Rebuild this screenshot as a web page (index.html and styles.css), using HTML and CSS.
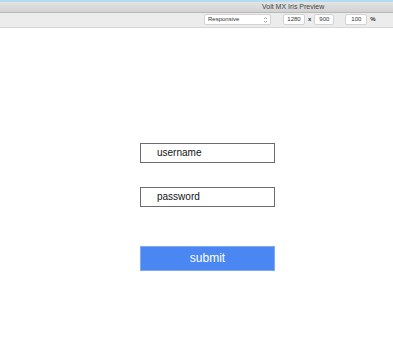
FILE: index.html
```html
<!DOCTYPE html>
<html>
<head>
<meta charset="utf-8">
<link rel="stylesheet" href="styles.css">
</head>
<body>
<div class="window">
  <div class="topstrip"></div>
  <div class="titlebar"><span class="title">Volt MX Iris Preview</span></div>
  <div class="toolbar">
    <div class="select"><span>Responsive</span>
      <svg class="arrows" width="5" height="8" viewBox="0 0 5 8"><path d="M1 3 L2.5 1.5 L4 3 M1 5 L2.5 6.5 L4 5" fill="none" stroke="#888" stroke-width="0.8"/></svg>
    </div>
    <div class="num w1">1280</div>
    <span class="sep">x</span>
    <div class="num w2">900</div>
    <div class="num w3">100</div>
    <span class="pct">%</span>
  </div>
  <div class="content">
    <div class="form">
      <div class="field">username</div>
      <div class="field">password</div>
      <div class="button">submit</div>
    </div>
  </div>
</div>
</body>
</html>
```
FILE: styles.css
```css
html, body { margin: 0; padding: 0; background: #fff; }
body { font-family: "Liberation Sans", Arial, sans-serif; width: 393px; height: 344px; overflow: hidden; }
.topstrip { height: 2px; background: #b3def1; }
.titlebar {
  height: 10px;
  background: linear-gradient(#e4e4e4, #d2d2d2);
  border-bottom: 1px solid #b8b8b8;
  position: relative;
}
.title {
  position: absolute; left: 262px; top: 1px;
  font-size: 7px; color: #444; line-height: 8px; white-space: nowrap;
}
.toolbar {
  height: 15px;
  background: #ececec;
  border-bottom: 1px solid #d6d6d6;
  display: flex; align-items: flex-start;
  padding-top: 1px; box-sizing: border-box;
  font-size: 6px; color: #333;
}
.select {
  margin-left: 204px; width: 67px; height: 11px; box-sizing: border-box;
  background: #fff; border: 1px solid #d3d3d3; border-radius: 2px;
  display: flex; justify-content: space-between; align-items: center;
  padding: 0 2px 0 3px; line-height: 9px;
}
.arrows { display: block; }
.num {
  height: 11px; box-sizing: border-box; background: #fff; border: 1px solid #d3d3d3;
  border-radius: 2px; line-height: 9px; text-align: center;
}
.w1 { margin-left: 12px; width: 22px; }
.sep { margin-left: 3px; margin-right: 3px; line-height: 11px; font-weight: bold; }
.w2 { width: 20px; }
.w3 { margin-left: 11px; width: 22px; }
.pct { margin-left: 3px; line-height: 11px; font-weight: bold; }
.content { padding-left: 140px; }
.form { padding-top: 115px; display: flex; flex-direction: column; width: 135px; }
.field {
  height: 20px; box-sizing: border-box; border: 1px solid #6b6b6b;
  font-size: 10px; line-height: 18px; padding-left: 16px; color: #111;
  margin-bottom: 24px;
}
.button {
  margin-top: 15px; height: 25px; background: #4a87f2;
  border: 1px solid #7eaaf5; box-sizing: border-box;
  color: #fff; font-size: 12px; text-align: center; line-height: 23px;
}
```
